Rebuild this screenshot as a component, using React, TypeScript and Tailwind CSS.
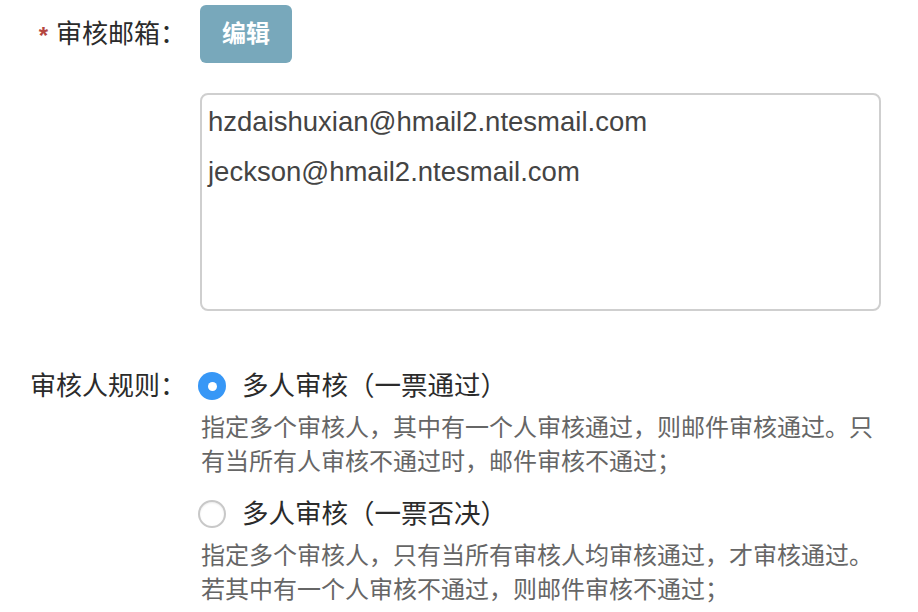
const font = "font-['Liberation_Sans','Noto_Sans_CJK_SC',sans-serif]";

const emails = ["hzdaishuxian@hmail2.ntesmail.com", "jeckson@hmail2.ntesmail.com"];

const rules = [
  {
    title: "多人审核（一票通过）",
    desc: ["指定多个审核人，其中有一个人审核通过，则邮件审核通过。只", "有当所有人审核不通过时，邮件审核不通过；"],
    checked: true,
  },
  {
    title: "多人审核（一票否决）",
    desc: ["指定多个审核人，只有当所有审核人均审核通过，才审核通过。", "若其中有一个人审核不通过，则邮件审核不通过；"],
    checked: false,
  },
];

function Radio({ checked }: { checked: boolean }) {
  if (checked) {
    return (
      <span className="flex h-[28px] w-[28px] shrink-0 items-center justify-center rounded-full bg-[#3797f6]">
        <span className="h-[9px] w-[9px] rounded-full bg-white" />
      </span>
    );
  }
  return (
    <span className="h-[28px] w-[28px] shrink-0 rounded-full border-2 border-[#c8c8c8] bg-white shadow-[inset_0_1px_2px_rgba(0,0,0,0.08)]" />
  );
}

export default function App() {
  return (
    <div className={`${font} min-h-[612px] w-[918px] bg-white text-[#2b2b2b]`}>
      {/* 审核邮箱 */}
      <div className="flex pt-[5px]">
        <div className="flex h-[58px] w-[186px] items-center justify-end text-[26px]">
          <span className="mr-[8px] mt-[4px] text-[24px] font-bold text-[#b5473f]">*</span>
          审核邮箱：
        </div>
        <div className="ml-[14px]">
          <button className="flex h-[58px] w-[92px] items-center justify-center rounded-[6px] bg-[#78a8bb] text-[24px] font-bold text-white">
            编辑
          </button>
        </div>
      </div>

      <div className="ml-[200px] mt-[30px] h-[218px] w-[681px] rounded-[8px] border-2 border-[#cfcfcf] px-[6px] pt-[2px]">
        {emails.map((e) => (
          <div key={e} className="text-[27.5px] leading-[50px] text-[#444]">
            {e}
          </div>
        ))}
      </div>

      {/* 审核人规则 */}
      <div className="mt-[57px] flex">
        <div className="h-[36px] w-[186px] text-right text-[26px] leading-[36px]">审核人规则：</div>
        <div className="ml-[12px] flex flex-col gap-[17px]">
          {rules.map((r) => (
            <div key={r.title}>
              <div className="flex h-[36px] items-center">
                <Radio checked={r.checked} />
                <span className="ml-[16px] text-[26.5px] leading-[36px]">{r.title}</span>
              </div>
              <div className="ml-[3px] mt-[7px] text-[24px] leading-[34px] text-[#666]">
                {r.desc.map((d) => (
                  <div key={d}>{d}</div>
                ))}
              </div>
            </div>
          ))}
        </div>
      </div>
    </div>
  );
}
